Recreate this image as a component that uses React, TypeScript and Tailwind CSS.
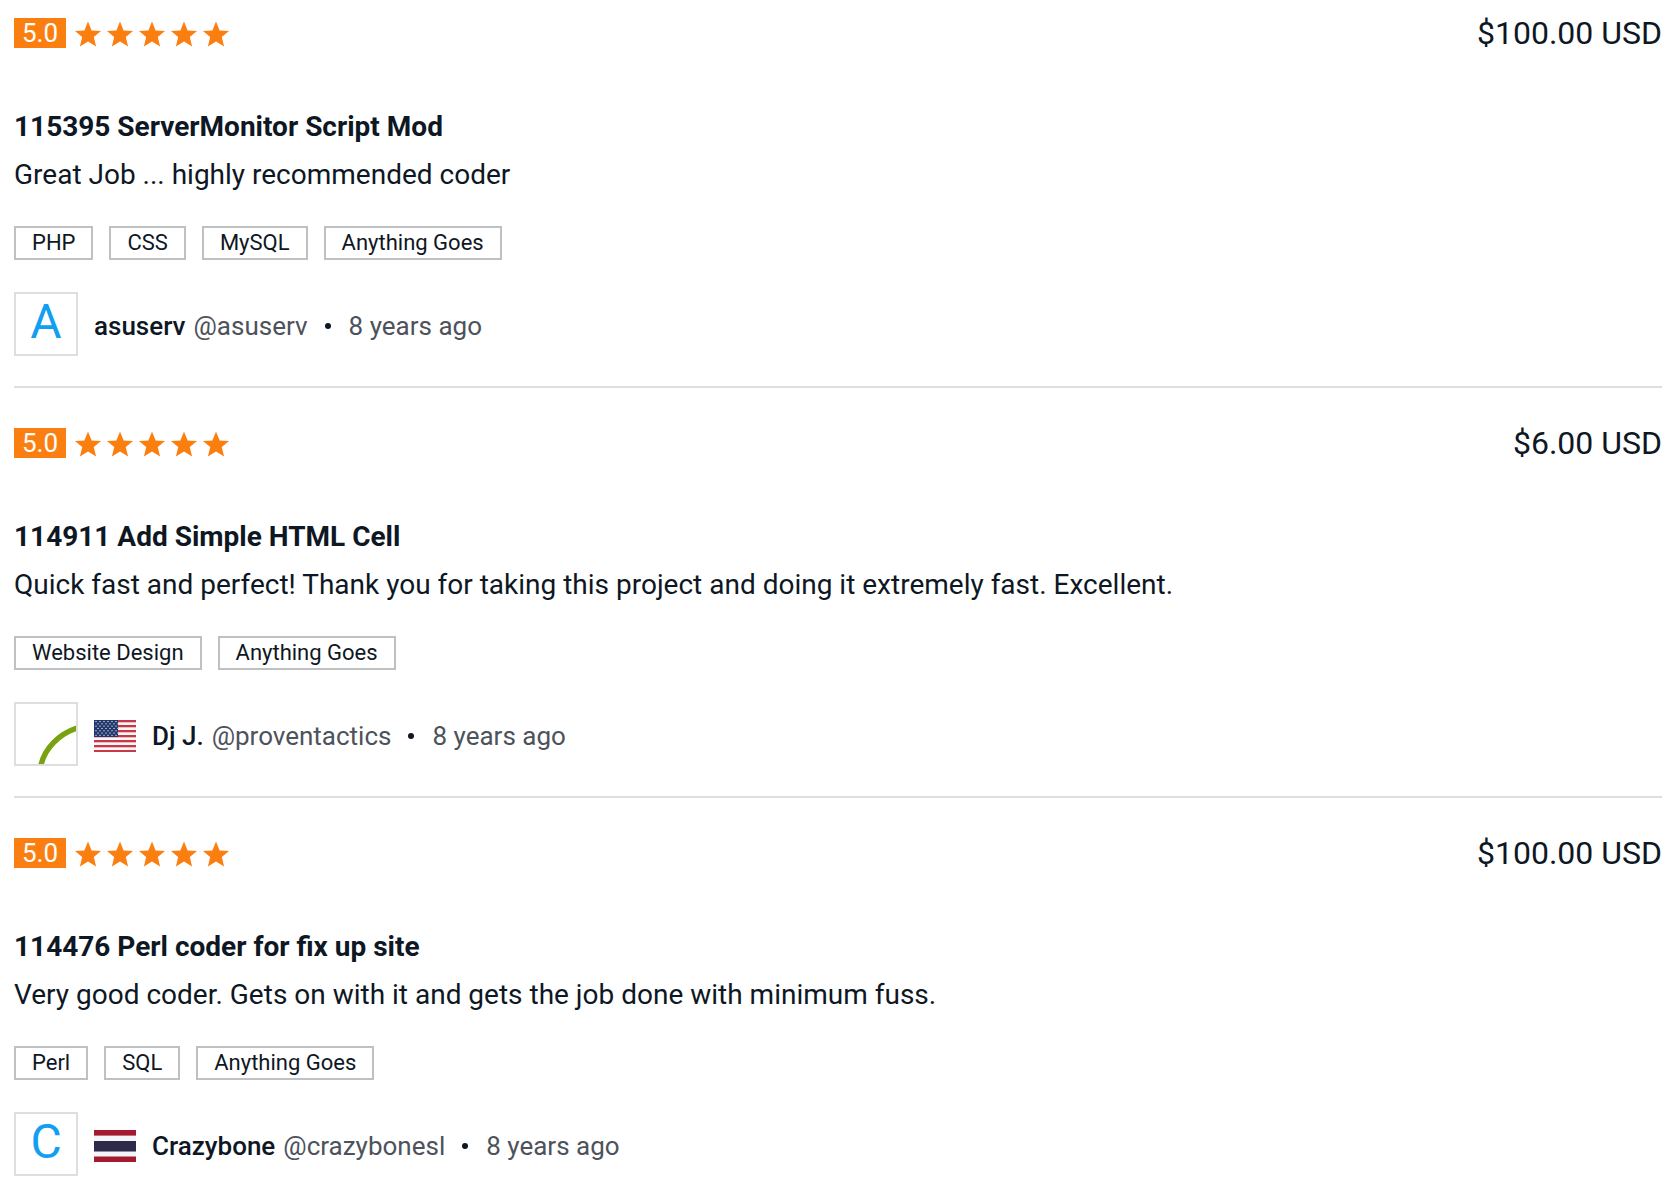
import type { ReactNode } from "react";

type Review = {
  amount: string;
  title: string;
  comment: string;
  skills: string[];
  avatar: ReactNode;
  flag?: ReactNode;
  name: string;
  handle: string;
};

function Star() {
  return (
    <svg viewBox="0 0 26 26" className="size-[26px]" fill="#fb7f10" aria-hidden="true">
      <path d="M13 .5l3.6 8.9 9.4.7-7.2 6 2.3 9.4-8.1-5.1-8.1 5.1 2.3-9.4-7.2-6 9.4-.7z" />
    </svg>
  );
}

function Letter({ children }: { children: string }) {
  return <span className="text-5xl leading-14 text-[#139ff0]">{children}</span>;
}

function ArcLogo() {
  return (
    <svg viewBox="0 0 60 60" className="size-[60px]" aria-hidden="true">
      <path d="M25 61C29 44 43 30 61 24" fill="none" stroke="#78a20f" strokeWidth="5.5" />
    </svg>
  );
}

function UsFlag() {
  const stripes = [0, 5, 10, 15, 20, 25, 30];
  const rows = [0, 1, 2, 3, 4, 5, 6];
  const columns = [0, 1, 2, 3, 4, 5];
  return (
    <svg viewBox="0 0 42 32" className="h-8 w-[42px]" role="img" aria-label="United States">
      <rect width="42" height="32" fill="#fbf6f7" />
      {stripes.map((y) => (
        <rect key={y} y={y} width="42" height="2.3" fill="#c53a49" />
      ))}
      <rect width="24" height="17" fill="#22376b" />
      {rows.map((r) =>
        columns.map((c) => (
          <rect
            key={`${r}-${c}`}
            x={1.2 + c * 4 + (r % 2) * 2}
            y={1 + r * 2.3}
            width="1.6"
            height="1.1"
            fill="#b4bfd2"
          />
        )),
      )}
    </svg>
  );
}

function ThaiFlag() {
  return (
    <svg viewBox="0 0 42 32" className="h-8 w-[42px]" role="img" aria-label="Thailand">
      <rect width="42" height="32" fill="#f4f5f8" />
      <rect width="42" height="5.6" fill="#a51931" />
      <rect y="11" width="42" height="10.5" fill="#2d2a4a" />
      <rect y="26.5" width="42" height="5.5" fill="#a51931" />
    </svg>
  );
}

const reviews: Review[] = [
  {
    amount: "$100.00 USD",
    title: "115395 ServerMonitor Script Mod",
    comment: "Great Job ... highly recommended coder",
    skills: ["PHP", "CSS", "MySQL", "Anything Goes"],
    avatar: <Letter>A</Letter>,
    name: "asuserv",
    handle: "@asuserv",
  },
  {
    amount: "$6.00 USD",
    title: "114911 Add Simple HTML Cell",
    comment:
      "Quick fast and perfect! Thank you for taking this project and doing it extremely fast. Excellent.",
    skills: ["Website Design", "Anything Goes"],
    avatar: <ArcLogo />,
    flag: <UsFlag />,
    name: "Dj J.",
    handle: "@proventactics",
  },
  {
    amount: "$100.00 USD",
    title: "114476 Perl coder for fix up site",
    comment: "Very good coder. Gets on with it and gets the job done with minimum fuss.",
    skills: ["Perl", "SQL", "Anything Goes"],
    avatar: <Letter>C</Letter>,
    flag: <ThaiFlag />,
    name: "Crazybone",
    handle: "@crazybonesl",
  },
];

function ReviewItem({ review }: { review: Review }) {
  return (
    <article className="border-b-2 border-[#dedede] pt-[35px] pb-[30px] first:pt-[13px] last:border-b-0 last:pb-3">
      <div className="flex h-10 items-center justify-between">
        <div className="flex items-center gap-[9px]">
          <span className="bg-[#fb7f10] px-2 text-[26px] leading-[30px] text-white">5.0</span>
          <span className="flex gap-1.5 pt-0.5" role="img" aria-label="5 out of 5 stars">
            <Star />
            <Star />
            <Star />
            <Star />
            <Star />
          </span>
        </div>
        <span className="text-[32px] leading-10">{review.amount}</span>
      </div>
      <h2 className="mt-[54px] text-[28px] leading-10 font-bold">
        <a href="#">{review.title}</a>
      </h2>
      <p className="mt-2 text-[28px] leading-10">{review.comment}</p>
      <ul className="mt-[31px] flex flex-wrap gap-4">
        {review.skills.map((skill) => (
          <li key={skill} className="border-2 border-[#bfc0c2] px-4 text-[22px] leading-[30px]">
            {skill}
          </li>
        ))}
      </ul>
      <div className="mt-8 flex items-center gap-4">
        <div className="flex size-16 shrink-0 items-start justify-center overflow-hidden border-2 border-[#dedede]">
          {review.avatar}
        </div>
        <div className="flex items-center gap-4 pt-1">
          {review.flag}
          <div className="flex items-center text-[26px] leading-10">
            <a href="#" className="font-medium">
              {review.name}
            </a>
            <span className="ml-2 text-[#4d525b]">{review.handle}</span>
            <span className="mr-[18px] ml-[17px] size-1.5 rounded-full bg-[#0e1724]" />
            <span className="text-[#4d525b]">8 years ago</span>
          </div>
        </div>
      </div>
    </article>
  );
}

export default function App() {
  return (
    <main className="bg-white pr-3 pl-3.5 font-['Roboto',sans-serif] text-[#0e1724]">
      {reviews.map((review) => (
        <ReviewItem key={review.title} review={review} />
      ))}
    </main>
  );
}
